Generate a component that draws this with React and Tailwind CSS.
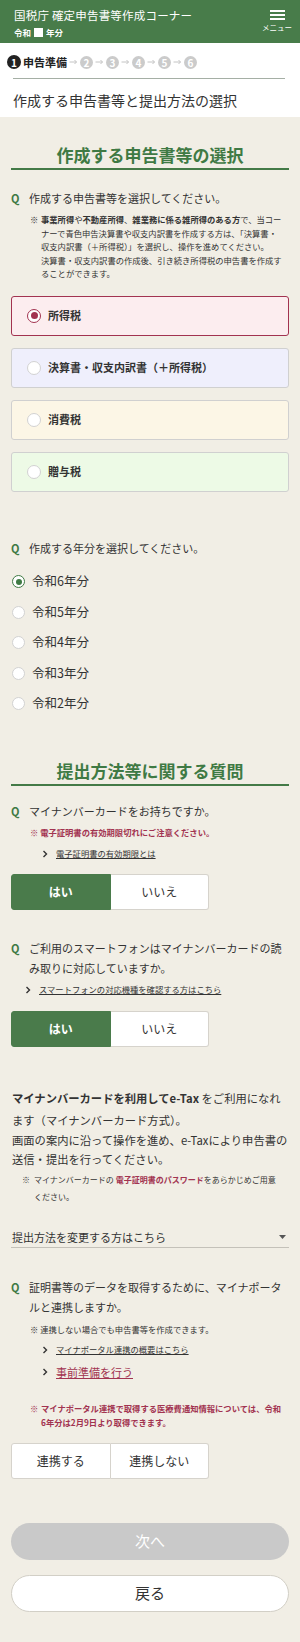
import React, { useState } from "react";

const FONT = { fontFamily: '"Noto Sans CJK JP", "Noto Sans", sans-serif' };

const Chevron = () => (
  <svg width="6" height="8" viewBox="0 0 6 8" className="shrink-0">
    <path d="M1.5 1l3 3-3 3" fill="none" stroke="#333" strokeWidth="1.4" />
  </svg>
);

const Arrow = () => (
  <svg width="9" height="6" viewBox="0 0 9 6" className="mx-[2px] shrink-0">
    <path d="M0.5 3h7M5.5 1l2 2-2 2" fill="none" stroke="#c4c4c4" strokeWidth="1" />
  </svg>
);

const StepCircle = ({ n }) => (
  <span className="w-[13px] h-[13px] rounded-full bg-[#cbcbcb] text-white text-[10px] font-bold leading-[13px] flex items-center justify-center">
    {n}
  </span>
);

const Question = ({ children, className = "" }) => (
  <div className={"flex text-[11px] text-[#333] " + className}>
    <span className="w-[18px] shrink-0 font-bold text-[#3f7a44]">Q</span>
    <span>{children}</span>
  </div>
);

const Heading = ({ children, className = "" }) => (
  <div className={"border-b-2 border-[#447a47] pb-[1px] " + className}>
    <h2 className="text-center text-[17px] leading-[24px] font-bold text-[#3f7a44]">{children}</h2>
  </div>
);

const LinkRow = ({ children, className = "" }) => (
  <div className={"flex items-center gap-[8px] text-[8.3px] leading-[13px] text-[#333] " + className}>
    <Chevron />
    <span className="underline">{children}</span>
  </div>
);

const Toggle = ({ left, right, value, onChange }) => (
  <div className="flex w-[198px] h-[36px] text-[12px]">
    {[left, right].map((label, i) => {
      const on = value === i;
      return (
        <button
          key={label}
          onClick={() => onChange(i)}
          className={
            "flex-1 flex items-center justify-center border " +
            (i === 0 ? "rounded-l-[3px] " : "rounded-r-[3px] border-l-0 ") +
            (on
              ? "bg-[#4a7b4b] border-[#4a7b4b] text-white font-bold"
              : "bg-white border-[#d6d3cc] text-[#333]")
          }
        >
          {label}
        </button>
      );
    })}
  </div>
);

const cards = [
  { label: "所得税", bg: "bg-[#fcedef]" },
  { label: "決算書・収支内訳書（＋所得税）", bg: "bg-[#efeffc]" },
  { label: "消費税", bg: "bg-[#fcf6e6]" },
  { label: "贈与税", bg: "bg-[#edfae6]" },
];

const years = ["令和6年分", "令和5年分", "令和4年分", "令和3年分", "令和2年分"];

export default function App() {
  const [form, setForm] = useState(0);
  const [year, setYear] = useState(0);
  const [card, setCard] = useState(0);
  const [phone, setPhone] = useState(0);
  const [link, setLink] = useState(-1);

  return (
    <div style={FONT} className="w-[300px] min-h-[1642px] bg-[#f1eee5] text-[#333]">
      {/* header */}
      <header className="h-[43px] bg-[#487c4a] flex justify-between text-white">
        <div className="pl-[14px] pt-[7px]">
          <div className="text-[11.5px] leading-[16px] tracking-[0.2px]">国税庁 確定申告書等作成コーナー</div>
          <div className="mt-[3px] h-[12px] flex items-center text-[8.5px] font-bold">
            <span>令和</span>
            <span className="w-[9px] h-[9px] bg-white mx-[3px]" />
            <span>年分</span>
          </div>
        </div>
        <div className="w-[30px] mr-[8px] pt-[10px] flex flex-col items-center">
          <span className="w-[15px] h-[2px] bg-white" />
          <span className="w-[15px] h-[2px] bg-white mt-[2px]" />
          <span className="w-[15px] h-[2px] bg-white mt-[2px]" />
          <span className="mt-[3px] text-[7.5px] leading-[10px] whitespace-nowrap">メニュー</span>
        </div>
      </header>

      {/* steps + title */}
      <div className="bg-white pt-[11px] pb-[7px]">
        <div className="h-[16px] flex items-center pl-[7px]">
          <span className="w-[14px] h-[14px] rounded-full bg-[#222] text-white text-[10px] font-bold flex items-center justify-center">1</span>
          <span className="ml-[2px] text-[11px] font-bold text-[#222]">申告準備</span>
          <Arrow />
          <StepCircle n="2" />
          <Arrow />
          <StepCircle n="3" />
          <Arrow />
          <StepCircle n="4" />
          <Arrow />
          <StepCircle n="5" />
          <Arrow />
          <StepCircle n="6" />
        </div>
        <div className="mt-[8px] ml-[13px] mr-[15px] h-[1px] bg-[#a5afa5]" />
        <h1 className="mt-[11px] px-[13px] text-[14px] leading-[20px] text-[#333]">作成する申告書等と提出方法の選択</h1>
      </div>

      <main className="px-[11px]">
        <Heading className="mt-[26px]">作成する申告書等の選択</Heading>

        <Question className="mt-[20px] leading-[16px]">作成する申告書等を選択してください。</Question>
        <div className="mt-[7px] pl-[19px] flex text-[8.3px] leading-[13.5px]">
          <span className="w-[11px] shrink-0">※</span>
          <p className="whitespace-nowrap">
            <b>事業所得</b>や<b>不動産所得</b>、<b>雑業務に係る雑所得のある方</b>で、当コー
            <br />
            ナーで青色申告決算書や収支内訳書を作成する方は、「決算書・
            <br />
            収支内訳書（＋所得税）」を選択し、操作を進めてください。
            <br />
            決算書・収支内訳書の作成後、引き続き所得税の申告書を作成す
            <br />
            ることができます。
          </p>
        </div>

        <div className="mt-[15px] flex flex-col gap-[12px]">
          {cards.map((c, i) => {
            const on = form === i;
            return (
              <button
                key={c.label}
                onClick={() => setForm(i)}
                className={
                  "h-[40px] w-full rounded-[3px] border-[1.5px] flex items-center pl-[15px] gap-[7px] text-left " +
                  c.bg +
                  " " +
                  (on ? "border-[#a23350]" : "border-[#d0d0d0]")
                }
              >
                <span
                  className={
                    "w-[14px] h-[14px] rounded-full bg-white flex items-center justify-center border " +
                    (on ? "border-[#a23350] border-[1.5px]" : "border-[#d2d2d2]")
                  }
                >
                  {on && <span className="w-[7px] h-[7px] rounded-full bg-[#a23350]" />}
                </span>
                <span className="text-[11px] font-bold text-[#333]">{c.label}</span>
              </button>
            );
          })}
        </div>

        <Question className="mt-[48px] leading-[16px]">作成する年分を選択してください。</Question>
        <div className="mt-[11px]">
          {years.map((y, i) => {
            const on = year === i;
            return (
              <button key={y} onClick={() => setYear(i)} className="h-[30.5px] w-full flex items-center gap-[7px] pl-[1px]">
                <span
                  className={
                    "w-[13px] h-[13px] rounded-full bg-white flex items-center justify-center border " +
                    (on ? "border-[#3f7a44] border-[1.5px]" : "border-[#d2d2d2]")
                  }
                >
                  {on && <span className="w-[6px] h-[6px] rounded-full bg-[#3f7a44]" />}
                </span>
                <span className="text-[12.5px] text-[#333]">{y}</span>
              </button>
            );
          })}
        </div>

        <Heading className="mt-[40px]">提出方法等に関する質問</Heading>

        <Question className="mt-[17px] leading-[16px]">マイナンバーカードをお持ちですか。</Question>
        <p className="mt-[7px] pl-[19px] text-[8.3px] leading-[13px] font-bold text-[#a23350]">※ 電子証明書の有効期限切れにご注意ください。</p>
        <LinkRow className="mt-[8px] pl-[31px]">電子証明書の有効期限とは</LinkRow>
        <div className="mt-[14px]">
          <Toggle left="はい" right="いいえ" value={card} onChange={setCard} />
        </div>

        <Question className="mt-[28px] leading-[20px]">ご利用のスマートフォンはマイナンバーカードの読み取りに対応していますか。</Question>
        <LinkRow className="mt-[5px] pl-[14px] gap-[6px]">スマートフォンの対応機種を確認する方はこちら</LinkRow>
        <div className="mt-[15px]">
          <Toggle left="はい" right="いいえ" value={phone} onChange={setPhone} />
        </div>

        <div className="mt-[40px] px-[1px] text-[11.3px]">
          <p className="leading-[22px]">
            <b>マイナンバーカードを利用してe-Tax</b> をご利用になれます（マイナンバーカード方式）。
          </p>
          <p className="leading-[19px]">画面の案内に沿って操作を進め、e-Taxにより申告書の送信・提出を行ってください。</p>
        </div>
        <div className="mt-[3px] pl-[11px] flex text-[8px] leading-[16.5px]">
          <span className="w-[12px] shrink-0">※</span>
          <p>
            マイナンバーカードの <span className="font-bold text-[#a23350]">電子証明書のパスワード</span>をあらかじめご用意
            <br />
            ください。
          </p>
        </div>

        <button className="mt-[24px] w-full flex items-center justify-between pl-[1px] pr-[3px] pb-[2px] border-b border-[#c4c1b9] text-[11px] leading-[16px]">
          <span>提出方法を変更する方はこちら</span>
          <svg width="7" height="4" viewBox="0 0 7 4">
            <path d="M0 0h7L3.5 4z" fill="#555" />
          </svg>
        </button>

        <Question className="mt-[29px] leading-[20px]">証明書等のデータを取得するために、マイナポータルと連携しますか。</Question>
        <p className="mt-[6px] pl-[19px] text-[8.3px] leading-[13px]">※ 連携しない場合でも申告書等を作成できます。</p>
        <LinkRow className="mt-[7px] pl-[31px]">マイナポータル連携の概要はこちら</LinkRow>
        <div className="mt-[8px] pl-[31px] flex items-center gap-[8px] text-[11px] leading-[16px]">
          <Chevron />
          <span className="underline text-[#a23350]">事前準備を行う</span>
        </div>
        <div className="mt-[21px] pl-[19px] flex text-[8.3px] leading-[14px] font-bold text-[#a23350]">
          <span className="w-[11px] shrink-0">※</span>
          <p>
            マイナポータル連携で取得する医療費通知情報については、令和
            <br />
            6年分は2月9日より取得できます。
          </p>
        </div>
        <div className="mt-[14px]">
          <Toggle left="連携する" right="連携しない" value={link} onChange={setLink} />
        </div>

        <button disabled className="mt-[44px] w-full h-[37px] rounded-full bg-[#c9c9c9] text-white text-[15px]">
          次へ
        </button>
        <button className="mt-[15px] w-full h-[37px] rounded-full bg-white border border-[#d2cfc6] text-[15px] text-[#333]">
          戻る
        </button>
        <div className="h-[29px]" />
      </main>
    </div>
  );
}
